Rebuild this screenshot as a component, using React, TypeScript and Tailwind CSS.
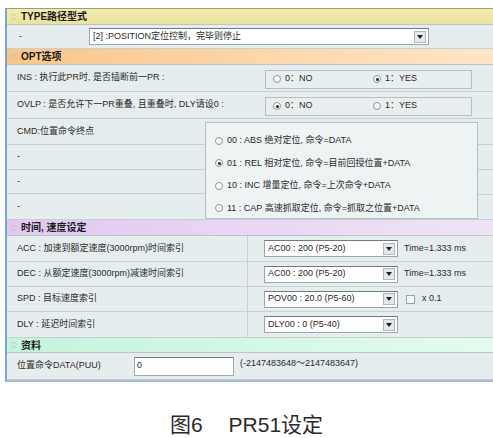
const ui = { fontFamily: '"Liberation Sans", "Noto Sans CJK SC", sans-serif' };

function Chevrons() {
  return (
    <svg width="7" height="8" viewBox="0 0 7 8" className="mr-[4px] shrink-0">
      <path d="M1 3.5 L3.5 1 L6 3.5 M1 7 L3.5 4.5 L6 7" fill="none" stroke="#c4bfa6" strokeWidth="1" />
    </svg>
  );
}

function Header({ title, bg, h }: { title: string; bg: string; h: string }) {
  return (
    <div className={`flex items-center pl-[3px] border-b border-[#b8c4c8] ${bg} ${h}`}>
      <Chevrons />
      <span className="text-[10px] font-bold text-[#1a1a1a]">{title}</span>
    </div>
  );
}

function Radio({ on, label, className = '' }: { on?: boolean; label: string; className?: string }) {
  return (
    <div className={`flex items-center gap-[4px] ${className}`}>
      <span className="w-[8px] h-[8px] rounded-full border border-[#8c9496] bg-white flex items-center justify-center">
        {on && <span className="w-[3px] h-[3px] rounded-full bg-[#222]" />}
      </span>
      <span>{label}</span>
    </div>
  );
}

function Select({ text, w }: { text: string; w: string }) {
  return (
    <div className={`h-[17px] ${w} bg-white border border-[#9aa6aa] border-t-[#6f7a7e] flex items-center justify-between pl-[3px] pr-[2px]`}>
      <span className="truncate">{text}</span>
      <span className="w-[12px] h-[12px] bg-[#e4e8ea] border border-[#b0b8bb] flex items-center justify-center">
        <svg width="6" height="4" viewBox="0 0 6 4">
          <path d="M0 0 H6 L3 4 Z" fill="#222" />
        </svg>
      </span>
    </div>
  );
}

function Row({ h, children, className = '' }: { h: string; children?: React.ReactNode; className?: string }) {
  return (
    <div className={`flex items-center border-b border-[#c4d0d4] bg-[#e6edee] ${h} ${className}`}>{children}</div>
  );
}

function Label({ text }: { text: string }) {
  return (
    <span className="w-[241px] h-full flex items-center pl-[10px] border-r border-[#c8d3d6] mr-[16px]">{text}</span>
  );
}

export default function App() {
  return (
    <div className="w-[493px] h-[438px] bg-white text-[9px] text-[#2a2a2a]" style={ui}>
      <div className="pt-[8px] pl-[5px]">
        <div className="border-l-2 border-t border-b-2 border-l-[#7ea6cc] border-t-[#a09c78] border-b-[#a8c0d4]">
          <Header title="TYPE路径型式" bg="bg-gradient-to-b from-[#f2ecb4] to-[#ebe39a]" h="h-[16px]" />
          <Row h="h-[24px]">
            <span className="w-[82px] pl-[12px]">-</span>
            <Select text="[2] :POSITION定位控制，完毕则停止" w="w-[340px]" />
          </Row>
          <Header title="OPT选项" bg="bg-gradient-to-r from-[#f8c68a] to-[#fde6c8]" h="h-[16px]" />
          <Row h="h-[27px]">
            <span className="w-[258px] pl-[10px]">INS : 执行此PR时, 是否插断前一PR :</span>
            <div className="w-[207px] h-[19px] mt-[2px] border border-[#b4c0c4] bg-[#e9efef] flex items-center pl-[7px]">
              <Radio label="0：NO" className="w-[100px]" />
              <Radio on label="1：YES" />
            </div>
          </Row>
          <Row h="h-[27px]">
            <span className="w-[258px] pl-[10px]">OVLP : 是否允许下一PR重叠, 且重叠时, DLY请设0 :</span>
            <div className="w-[207px] h-[19px] mt-[2px] border border-[#b4c0c4] bg-[#e9efef] flex items-center pl-[7px]">
              <Radio on label="0：NO" className="w-[100px]" />
              <Radio label="1：YES" />
            </div>
          </Row>
          <div className="flex h-[101px] bg-[#e6edee] border-b border-[#c4d0d4]">
            <div className="w-[198px] flex flex-col">
              <div className="h-[26px] flex items-center pl-[10px] border-b border-[#c4d0d4]">CMD:位置命令终点</div>
              <div className="h-[25px] flex items-center pl-[10px] border-b border-[#c4d0d4]">-</div>
              <div className="h-[25px] flex items-center pl-[10px] border-b border-[#c4d0d4]">-</div>
              <div className="h-[25px] flex items-center pl-[10px]">-</div>
            </div>
            <div className="w-[273px] mt-[3px] h-[97px] border border-[#b4c0c4] bg-[#eef3f3] flex flex-col pl-[9px] pt-[11px] gap-[9px]">
              <Radio label="00 : ABS 绝对定位, 命令=DATA" />
              <Radio on label="01 : REL 相对定位, 命令=目前回授位置+DATA" />
              <Radio label="10 : INC 增量定位, 命令=上次命令+DATA" />
              <Radio label="11 : CAP 高速抓取定位, 命令=抓取之位置+DATA" />
            </div>
            <div className="flex-1 flex flex-col">
              <div className="h-[26px] border-b border-[#c4d0d4]" />
              <div className="h-[25px] border-b border-[#c4d0d4]" />
              <div className="h-[25px] border-b border-[#c4d0d4]" />
            </div>
          </div>
          <Header title="时间, 速度设定" bg="bg-gradient-to-r from-[#e2c8f0] to-[#efe4f6]" h="h-[16px]" />
          <Row h="h-[26px]">
            <Label text="ACC : 加速到额定速度(3000rpm)时间索引" />
            <Select text="AC00 : 200 (P5-20)" w="w-[134px]" />
            <span className="ml-[6px]">Time=1.333 ms</span>
          </Row>
          <Row h="h-[25px]">
            <Label text="DEC : 从额定速度(3000rpm)减速时间索引" />
            <Select text="AC00 : 200 (P5-20)" w="w-[134px]" />
            <span className="ml-[6px]">Time=1.333 ms</span>
          </Row>
          <Row h="h-[25px]">
            <Label text="SPD : 目标速度索引" />
            <Select text="POV00 : 20.0 (P5-60)" w="w-[134px]" />
            <span className="ml-[8px] w-[9px] h-[9px] border border-[#9aa4a8] bg-[#f6f8f8]" />
            <span className="ml-[7px]">x 0.1</span>
          </Row>
          <Row h="h-[26px]">
            <Label text="DLY : 延迟时间索引" />
            <Select text="DLY00 : 0 (P5-40)" w="w-[134px]" />
          </Row>
          <Header title="资料" bg="bg-gradient-to-r from-[#c4f4dc] to-[#e4fbf0]" h="h-[15px]" />
          <Row h="h-[27px]">
            <span className="w-[127px] pl-[10px]">位置命令DATA(PUU)</span>
            <div className="w-[100px] h-[19px] bg-white border border-[#a0aaae] border-t-[#707a7e] flex items-center pl-[2px]">0</div>
            <span className="ml-[6px] -mt-[4px]">(-2147483648～2147483647)</span>
          </Row>
        </div>
      </div>
      <div
        className="mt-[27px] flex justify-center text-[21px] text-[#2a2a2a]"
        style={{ fontFamily: '"Liberation Sans", "Noto Sans CJK SC", sans-serif' }}
      >
        <span>图6</span>
        <span className="ml-[26px]">PR51设定</span>
      </div>
    </div>
  );
}
